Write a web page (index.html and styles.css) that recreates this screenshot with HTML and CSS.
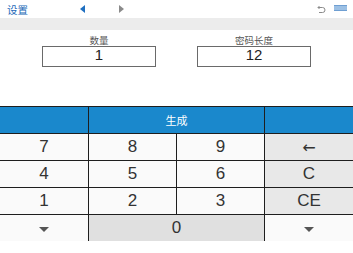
FILE: index.html
```html
<!DOCTYPE html>
<html>
<head>
<meta charset="utf-8">
<link rel="stylesheet" href="styles.css">
</head>
<body>
<div class="topbar">
  <span class="settings">设置</span>
  <div class="nav">
    <svg class="arrow" width="5" height="8" viewBox="0 0 5 8"><path d="M5 0 L0 4 L5 8 Z" fill="#1f6fc0"/></svg>
    <svg class="arrow" width="5" height="8" viewBox="0 0 5 8"><path d="M0 0 L5 4 L0 8 Z" fill="#8a8a8a"/></svg>
  </div>
  <div class="tools">
    <svg class="undo" width="9" height="9" viewBox="0 0 9 9"><path d="M2.5 1 L1 2.5 L2.5 4 M1 2.5 H5.5 A2.5 2.5 0 0 1 5.5 7.5 H2" fill="none" stroke="#8a8a8a" stroke-width="1"/></svg>
    <span class="menu"></span>
  </div>
</div>
<div class="band"></div>
<div class="fields">
  <div class="field">
    <div class="label">数量</div>
    <div class="box">1</div>
  </div>
  <div class="field">
    <div class="label">密码长度</div>
    <div class="box">12</div>
  </div>
</div>
<div class="keypad">
  <div class="key blue"></div>
  <div class="key blue span2 gen">生成</div>
  <div class="key blue"></div>
  <div class="key">7</div>
  <div class="key">8</div>
  <div class="key">9</div>
  <div class="key op"><span class="back">←</span></div>
  <div class="key">4</div>
  <div class="key">5</div>
  <div class="key">6</div>
  <div class="key op">C</div>
  <div class="key">1</div>
  <div class="key">2</div>
  <div class="key">3</div>
  <div class="key op">CE</div>
  <div class="key"><span class="down"></span></div>
  <div class="key span2 zero">0</div>
  <div class="key"><span class="down"></span></div>
</div>
</body>
</html>
```
FILE: styles.css
```css
html, body {
  margin: 0;
  padding: 0;
  background: #ffffff;
  font-family: "Liberation Sans", Arial, "Noto Sans CJK SC", sans-serif;
}
.topbar {
  height: 18px;
  display: flex;
  align-items: center;
  padding: 0 6px 0 7px;
}
.settings {
  font-size: 10.5px;
  color: #2468b8;
  width: 73px;
}
.nav {
  display: flex;
  gap: 34px;
  align-items: center;
}
.arrow { display: block; }
.tools {
  margin-left: auto;
  display: flex;
  align-items: center;
  gap: 8px;
}
.undo { display: block; margin-top: 1px; }
.menu {
  display: block;
  width: 13px;
  height: 4px;
  background: #9cc0e4;
  border-top: 1px solid #6f9fd2;
  border-bottom: 1px solid #6f9fd2;
  margin-top: -2px;
}
.band {
  height: 12px;
  background: #ececec;
}
.fields {
  display: flex;
  padding: 5px 0 0 42px;
  gap: 41px;
  box-sizing: border-box;
  height: 76px;
}
.field {
  display: flex;
  flex-direction: column;
  align-items: center;
  width: 114px;
}
.label {
  font-size: 9.5px;
  color: #555;
  height: 11px;
  line-height: 11px;
}
.box {
  box-sizing: border-box;
  width: 114px;
  height: 21px;
  border: 1.5px solid #6a6a6a;
  text-align: center;
  font-size: 15px;
  line-height: 16px;
  color: #222;
}
.keypad {
  display: grid;
  grid-template-columns: 88px 87px 87px 1fr;
  grid-auto-rows: 26px;
  gap: 1px;
  background: #1e1e1e;
  border-top: 1px solid #1e1e1e;
}
.key {
  background: #fafafa;
  display: flex;
  align-items: center;
  justify-content: center;
  font-size: 17px;
  color: #333;
}
.blue {
  background: #1a88cc;
}
.gen {
  color: #fff;
  font-size: 11px;
}
.span2 { grid-column: span 2; }
.op { background: #e8e8e8; }
.zero { background: #e0e0e0; }
.back {
  font-family: "DejaVu Sans", sans-serif;
  font-size: 16px;
  line-height: 16px;
  margin-top: 1px;
}
.down {
  width: 0;
  height: 0;
  border-left: 5px solid transparent;
  border-right: 5px solid transparent;
  border-top: 5px solid #555;
  margin-top: 2px;
}
```
